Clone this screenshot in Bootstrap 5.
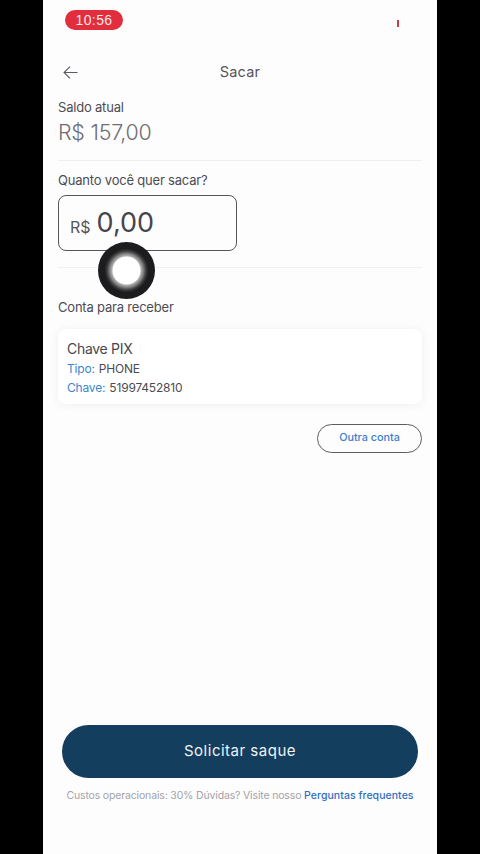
<!DOCTYPE html>
<html lang="pt-BR">
<head>
    <meta charset="UTF-8">
    <meta name="viewport" content="width=device-width, initial-scale=1.0">
    <title>Sacar</title>
    <link href="https://cdn.jsdelivr.net/npm/bootstrap@5.3.0/dist/css/bootstrap.min.css" rel="stylesheet">
    <style>
        html, body { height: 854px; overflow: hidden; background: #000; }
        body { font-family: Inter, "Liberation Sans", sans-serif; color: #4a4a50; }
        .phone { width: 394px; height: 854px; margin-left: 43px; background: #fefdfe; position: relative; }
        .status-bar { height: 41px; padding: 10px 14px 0 22px; }
        .time-pill { width: 58px; height: 20px; background: #e22d3c; color: #fbe9ea; font-size: 14px; line-height: 20px; letter-spacing: .4px; text-align: center; border-radius: 10px; font-family: "Liberation Sans", sans-serif; }
        .rec-dot { width: 2px; height: 7px; background: #c83a52; margin: 10px 24px 0 0; }
        .top-bar { height: 58px; padding: 4px 20px 0 20px; position: relative; }
        .top-title { font-size: 14.5px; color: #55555b; letter-spacing: .2px; position: absolute; left: 0; right: 0; margin-top: -1px; text-align: center; }
        .content { padding: 0 15px; }
        .field-label { font-size: 13px; line-height: 16px; color: #4c4c52; letter-spacing: -.2px; }
        .ask-label { padding: 11px 0 7px; }
        .conta-label { padding-top: 31px; }
        .balance { font-size: 21.4px; line-height: 24px; color: #6e6e74; font-weight: 300; margin-top: 5px; letter-spacing: -.2px; }
        .split { border-top: 1px solid #f0eff1; }
        .amount-box { width: 179px; height: 56px; border: 1px solid #55555b; border-radius: 8px; padding-left: 11px; }
        .amount-cur { font-size: 16px; color: #55555b; margin-top: 7px; margin-right: 6px; }
        .amount-val { font-size: 27px; line-height: 32px; color: #45454b; font-weight: 400; }
        .touch-mark { position: absolute; left: 55px; top: 242px; width: 57px; height: 57px; border-radius: 50%; background: radial-gradient(circle, #fff 0 13.5px, #b4b4b4 14.5px, #7c7c7c 17px, #3c3c3c 19.5px, #1c1c1e 22px); }
        .pix-card { border-radius: 8px; border: 0; box-shadow: 0 1px 8px rgba(40, 40, 60, .08); padding: 10px 9px 6px; background: #fff; height: 75px; margin-top: 14px; }
        .pix-title { font-size: 14px; line-height: 20px; color: #47474d; letter-spacing: -.3px; }
        .pix-line { font-size: 12px; line-height: 19px; color: #4c4c52; letter-spacing: -.2px; word-spacing: 1px; }
        .pix-line span { color: #3a85cf; }
        .btn-row { margin-top: 20px; }
        .other-btn { width: 105px; height: 29px; padding: 0; border: 1px solid #5c5c62; border-radius: 15px; color: #3a7fce; font-size: 10.8px; font-weight: 500; background: transparent; }
        .foot { position: absolute; left: 0; right: 0; bottom: 0; height: 129px; padding: 0 19px; }
        .send-btn { width: 100%; height: 53px; border: 0; border-radius: 27px; background: #143e5e; color: #eef3f6; font-size: 15px; letter-spacing: .5px; }
        .foot-note { font-size: 10.5px; line-height: 14px; color: #a3a3a8; margin-top: 11px; white-space: nowrap; letter-spacing: -.16px; }
        .foot-note a { color: #2f6fc4; text-decoration: none; font-weight: 500; letter-spacing: .05px; }
    </style>
</head>
<body>
    <div class="phone">
        <div class="status-bar d-flex justify-content-between">
            <div class="time-pill">10:56</div>
            <div class="rec-dot"></div>
        </div>

        <div class="top-bar d-flex align-items-center">
            <svg width="15" height="13" viewBox="0 0 15 13" fill="none" stroke="#5a5a60" stroke-width="1.1">
                <path d="M14.5 6.5H1M7 .6 1 6.5l6 5.9"/>
            </svg>
            <div class="top-title">Sacar</div>
        </div>

        <div class="content">
            <div class="field-label">Saldo atual</div>
            <div class="balance">R$ 157,00</div>
            <div class="split mt-3"></div>

            <div class="field-label ask-label">Quanto você quer sacar?</div>
            <div class="amount-box d-flex align-items-center">
                <span class="amount-cur">R$</span>
                <span class="amount-val">0,00</span>
            </div>
            <div class="split mt-3"></div>

            <div class="field-label conta-label">Conta para receber</div>
            <div class="card pix-card">
                <div class="pix-title">Chave PIX</div>
                <div class="pix-line"><span>Tipo:</span> PHONE</div>
                <div class="pix-line"><span>Chave:</span> 51997452810</div>
            </div>
            <div class="d-flex justify-content-end btn-row">
                <button class="btn other-btn" type="button">Outra conta</button>
            </div>
        </div>

        <div class="touch-mark"></div>

        <div class="foot">
            <button class="btn send-btn" type="button">Solicitar saque</button>
            <div class="foot-note text-center">Custos operacionais: 30% Dúvidas? Visite nosso <a href="#">Perguntas frequentes</a></div>
        </div>
    </div>
</body>
</html>
